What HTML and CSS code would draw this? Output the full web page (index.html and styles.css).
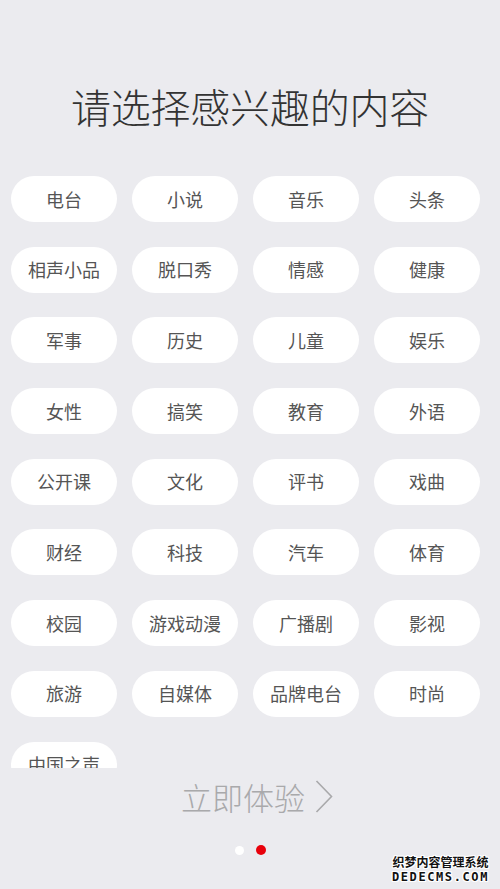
FILE: index.html
```html
<!DOCTYPE html>
<html lang="zh-CN">
<head>
    <meta charset="UTF-8">
    <meta name="viewport" content="width=device-width, initial-scale=1.0">
    <title>请选择感兴趣的内容</title>
    <link rel="stylesheet" href="styles.css">
</head>
<body>
    <div class="page">
        <h1 class="title">请选择感兴趣的内容</h1>

        <div class="tagBox">
            <div class="tagGrid">
                <span class="tag">电台</span>
                <span class="tag">小说</span>
                <span class="tag">音乐</span>
                <span class="tag">头条</span>
                <span class="tag">相声小品</span>
                <span class="tag">脱口秀</span>
                <span class="tag">情感</span>
                <span class="tag">健康</span>
                <span class="tag">军事</span>
                <span class="tag">历史</span>
                <span class="tag">儿童</span>
                <span class="tag">娱乐</span>
                <span class="tag">女性</span>
                <span class="tag">搞笑</span>
                <span class="tag">教育</span>
                <span class="tag">外语</span>
                <span class="tag">公开课</span>
                <span class="tag">文化</span>
                <span class="tag">评书</span>
                <span class="tag">戏曲</span>
                <span class="tag">财经</span>
                <span class="tag">科技</span>
                <span class="tag">汽车</span>
                <span class="tag">体育</span>
                <span class="tag">校园</span>
                <span class="tag">游戏动漫</span>
                <span class="tag">广播剧</span>
                <span class="tag">影视</span>
                <span class="tag">旅游</span>
                <span class="tag">自媒体</span>
                <span class="tag">品牌电台</span>
                <span class="tag">时尚</span>
                <span class="tag">中国之声</span>
            </div>
        </div>

        <div class="startRow">
            <span class="startText">立即体验</span>
            <svg class="chevron" width="18" height="33" viewBox="0 0 18 33">
                <polyline points="1.5,1 16.5,16.5 1.5,32" fill="none" stroke="#a9a9ab" stroke-width="1.6"/>
            </svg>
        </div>

        <div class="dots">
            <span class="dot"></span>
            <span class="dot active"></span>
        </div>
    </div>

    <!-- watermark on top of the screenshot -->
    <div class="watermark">
        <div class="wmTop">织梦内容管理系统</div>
        <div class="wmBottom">DEDECMS.COM</div>
    </div>
</body>
</html>
```

FILE: styles.css
```css
body {
    margin: 0;
    padding: 0;
    background-color: #ebebef;
    font-family: "Noto Sans CJK SC", "Noto Sans", sans-serif;
    width: 500px;
    height: 889px;
    overflow: hidden;
    position: relative;
}

.page {
    display: flex;
    flex-direction: column;
}

.title {
    margin: 0;
    padding-top: 86px;
    font-size: 40px;
    line-height: 40px;
    font-weight: 300;
    color: #333;
    text-align: center;
    letter-spacing: -0.2px;
}

.tagBox {
    margin-top: 50px;
    height: 592px;
    overflow: hidden;
    padding-left: 11px;
}

.tagGrid {
    display: grid;
    grid-template-columns: repeat(4, 106px);
    column-gap: 15px;
    row-gap: 24.7px;
}

.tag {
    height: 46px;
    border-radius: 23px;
    background-color: #fff;
    color: #555;
    font-size: 18px;
    display: flex;
    align-items: center;
    justify-content: center;
    padding-bottom: 1px;
    box-sizing: border-box;
}

.startRow {
    margin-top: 12px;
    display: flex;
    justify-content: center;
    align-items: center;
    gap: 10px;
    padding-left: 14px;
    height: 33px;
}

.startText {
    font-size: 31px;
    line-height: 31px;
    font-weight: 300;
    color: #a9a9ab;
}

.dots {
    margin-top: 32px;
    display: flex;
    justify-content: center;
    align-items: center;
    gap: 12px;
}

.dot {
    width: 9px;
    height: 9px;
    border-radius: 50%;
    background-color: #fff;
}

.dot.active {
    width: 10px;
    height: 10px;
    background-color: #e8000b;
}

.watermark {
    position: absolute;
    right: 11px;
    bottom: 5px;
    text-align: center;
    color: #111;
    font-weight: bold;
    text-shadow: 1px 0 0 #fff, -1px 0 0 #fff, 0 1px 0 #fff, 0 -1px 0 #fff,
        1px 1px 0 #fff, -1px -1px 0 #fff, 1px -1px 0 #fff, -1px 1px 0 #fff;
}

.wmTop {
    font-size: 12px;
    line-height: 16px;
}

.wmBottom {
    font-family: "DejaVu Sans Mono", monospace;
    font-size: 12px;
    line-height: 14px;
    letter-spacing: 1.6px;
}
```
